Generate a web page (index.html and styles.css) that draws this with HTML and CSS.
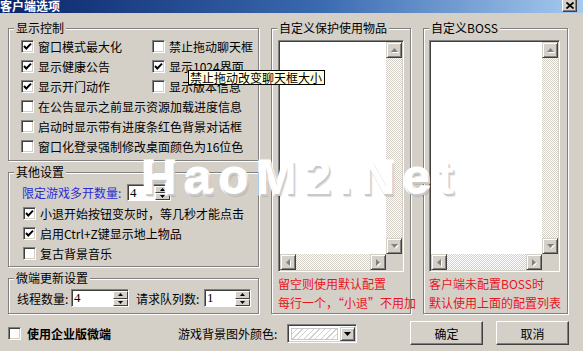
FILE: index.html
```html
<!DOCTYPE html>
<html lang="zh-CN">
<head>
<meta charset="utf-8">
<title>客户端选项</title>
<link rel="stylesheet" href="styles.css">
</head>
<body>
<div class="window">
  <div class="titlebar">
    <span class="title">客户端选项</span>
    <span class="close"><svg width="8" height="7" viewBox="0 0 8 7"><path d="M0.5 0.5 L7.5 6.5 M7.5 0.5 L0.5 6.5" stroke="#000" stroke-width="1.7"/></svg></span>
  </div>

  <div class="main">
    <div class="leftcol">
      <div class="group g1">
        <span class="legend">显示控制</span>
        <div class="grid1">
          <label class="cb"><span class="box on"><svg width="9" height="9" viewBox="0 0 9 9"><path d="M1 4 L3.3 6.5 L8 1.6" fill="none" stroke="#000" stroke-width="1.9"/></svg></span>窗口模式最大化</label>
          <label class="cb"><span class="box"></span>禁止拖动聊天框</label>
          <label class="cb"><span class="box on"><svg width="9" height="9" viewBox="0 0 9 9"><path d="M1 4 L3.3 6.5 L8 1.6" fill="none" stroke="#000" stroke-width="1.9"/></svg></span>显示健康公告</label>
          <label class="cb"><span class="box on"><svg width="9" height="9" viewBox="0 0 9 9"><path d="M1 4 L3.3 6.5 L8 1.6" fill="none" stroke="#000" stroke-width="1.9"/></svg></span>显示1024界面</label>
          <label class="cb"><span class="box on"><svg width="9" height="9" viewBox="0 0 9 9"><path d="M1 4 L3.3 6.5 L8 1.6" fill="none" stroke="#000" stroke-width="1.9"/></svg></span>显示开门动作</label>
          <label class="cb"><span class="box"></span>显示版本信息</label>
          <label class="cb span2"><span class="box"></span>在公告显示之前显示资源加载进度信息</label>
          <label class="cb span2"><span class="box"></span>启动时显示带有进度条红色背景对话框</label>
          <label class="cb span2"><span class="box"></span>窗口化登录强制修改桌面颜色为16位色</label>
        </div>
      </div>

      <div class="group g2">
        <span class="legend">其他设置</span>
        <div class="spinrow">
          <span class="bluelab">限定游戏多开数量:</span>
          <span class="spin s-limit"><span class="val">4</span><span class="arrows"><i><svg width="5" height="3" viewBox="0 0 5 3"><path d="M0 3 L2.5 0 L5 3Z"/></svg></i><i><svg width="5" height="3" viewBox="0 0 5 3"><path d="M0 0 L2.5 3 L5 0Z"/></svg></i></span></span>
        </div>
        <label class="cb row"><span class="box on"><svg width="9" height="9" viewBox="0 0 9 9"><path d="M1 4 L3.3 6.5 L8 1.6" fill="none" stroke="#000" stroke-width="1.9"/></svg></span>小退开始按钮变灰时，等几秒才能点击</label>
        <label class="cb row"><span class="box on"><svg width="9" height="9" viewBox="0 0 9 9"><path d="M1 4 L3.3 6.5 L8 1.6" fill="none" stroke="#000" stroke-width="1.9"/></svg></span>启用Ctrl+Z键显示地上物品</label>
        <label class="cb row"><span class="box"></span>复古背景音乐</label>
      </div>

      <div class="group g3">
        <span class="legend">微端更新设置</span>
        <div class="updrow">
          <span class="lab1">线程数量:</span>
          <span class="spin s-thread"><span class="val">4</span><span class="arrows"><i><svg width="5" height="3" viewBox="0 0 5 3"><path d="M0 3 L2.5 0 L5 3Z"/></svg></i><i><svg width="5" height="3" viewBox="0 0 5 3"><path d="M0 0 L2.5 3 L5 0Z"/></svg></i></span></span>
          <span class="lab2">请求队列数:</span>
          <span class="spin s-queue"><span class="val">1</span><span class="arrows"><i><svg width="5" height="3" viewBox="0 0 5 3"><path d="M0 3 L2.5 0 L5 3Z"/></svg></i><i><svg width="5" height="3" viewBox="0 0 5 3"><path d="M0 0 L2.5 3 L5 0Z"/></svg></i></span></span>
        </div>
      </div>
    </div>

    <div class="group listgroup lg-a">
      <span class="legend">自定义保护使用物品</span>
      <div class="listbox lb-a">
        <div class="lcontent"></div>
        <div class="vscroll">
          <span class="sbtn"><svg width="7" height="4" viewBox="0 0 7 4"><path d="M0 4 L3.5 0 L7 4Z"/></svg></span>
          <span class="track"></span>
          <span class="sbtn"><svg width="7" height="4" viewBox="0 0 7 4"><path d="M0 0 L3.5 4 L7 0Z"/></svg></span>
        </div>
        <div class="hscroll">
          <span class="sbtn"><svg width="4" height="7" viewBox="0 0 4 7"><path d="M4 0 L0 3.5 L4 7Z"/></svg></span>
          <span class="track"></span>
          <span class="sbtn"><svg width="4" height="7" viewBox="0 0 4 7"><path d="M0 0 L4 3.5 L0 7Z"/></svg></span>
        </div>
        <div class="corner"></div>
      </div>
      <div class="note first">留空则使用默认配置</div>
      <div class="note">每行一个，“小退”不用加</div>
    </div>

    <div class="group listgroup lg-b">
      <span class="legend">自定义BOSS</span>
      <div class="listbox lb-b">
        <div class="lcontent"></div>
        <div class="vscroll">
          <span class="sbtn"><svg width="7" height="4" viewBox="0 0 7 4"><path d="M0 4 L3.5 0 L7 4Z"/></svg></span>
          <span class="track"></span>
          <span class="sbtn"><svg width="7" height="4" viewBox="0 0 7 4"><path d="M0 0 L3.5 4 L7 0Z"/></svg></span>
        </div>
        <div class="hscroll">
          <span class="sbtn"><svg width="4" height="7" viewBox="0 0 4 7"><path d="M4 0 L0 3.5 L4 7Z"/></svg></span>
          <span class="track"></span>
          <span class="sbtn"><svg width="4" height="7" viewBox="0 0 4 7"><path d="M0 0 L4 3.5 L0 7Z"/></svg></span>
        </div>
        <div class="corner"></div>
      </div>
      <div class="note first">客户端未配置BOSS时</div>
      <div class="note">默认使用上面的配置列表</div>
    </div>
  </div>

  <div class="bottombar">
    <label class="ent"><span class="box"></span>使用企业版微端</label>
    <span class="colorlab">游戏背景图外颜色:</span>
    <span class="combo"><span class="swatch"></span><span class="dd"><svg width="7" height="4" viewBox="0 0 7 4"><path d="M0 0 L3.5 4 L7 0Z"/></svg></span></span>
    <div class="buttons">
      <span class="btn">确定</span>
      <span class="btn">取消</span>
    </div>
  </div>

  <div class="tip">禁止拖动改变聊天框大小</div>
  <div class="watermark">HaoM2.Net</div>
</div>
</body>
</html>
```

FILE: styles.css
```css
* { box-sizing: border-box; }

body {
  margin: 0;
  width: 583px;
  height: 351px;
  overflow: hidden;
  background: #d4d0c8;
  font-family: "Noto Sans CJK SC", "Liberation Sans", sans-serif;
  font-size: 12px;
  color: #000;
}

.window {
  position: relative;
  width: 583px;
  height: 351px;
}

/* title bar */
.titlebar {
  height: 13px;
  display: flex;
  justify-content: space-between;
  align-items: flex-end;
  overflow: hidden;
  background: linear-gradient(to right, #0a246a 0%, #3a6ab0 55%, #a6caf0 100%);
}
.title {
  color: #fff;
  font-weight: bold;
  font-size: 12px;
  line-height: 16px;
  margin-bottom: -1px;
}
.close {
  align-self: flex-start;
  width: 15px;
  height: 12px;
  margin-right: 6px;
  background: #d4d0c8;
  border: 1px solid;
  border-top: 0;
  border-color: #fff #404040 #404040 #fff;
  box-shadow: inset -1px -1px 0 #808080;
  display: flex;
  align-items: center;
  justify-content: center;
}

/* main layout */
.main {
  display: flex;
  gap: 12px;
  padding: 15px 0 0 8px;
}
.leftcol {
  width: 251px;
  display: flex;
  flex-direction: column;
  gap: 11px;
}

.group {
  position: relative;
  border: 1px solid #808080;
  box-shadow: 1px 1px 0 #fff, inset 1px 1px 0 #fff;
}
.legend {
  position: absolute;
  top: -8px;
  left: 5px;
  padding: 0 2px;
  background: #d4d0c8;
  line-height: 14px;
  white-space: nowrap;
}

/* checkboxes */
.cb {
  display: flex;
  align-items: center;
  gap: 4px;
  white-space: nowrap;
  height: 20px;
}
.box {
  flex: none;
  width: 13px;
  height: 13px;
  background: #fff;
  border: 1px solid;
  border-color: #808080 #fff #fff #808080;
  box-shadow: inset 1px 1px 0 #404040, inset -1px -1px 0 #d4d0c8;
  display: inline-flex;
  align-items: center;
  justify-content: center;
}

.g1 { padding: 7px 0 4px 12px; }
.grid1 {
  display: grid;
  grid-template-columns: 131px auto;
  grid-auto-rows: 20px;
}
.span2 { grid-column: 1 / span 2; }

.g2 { padding: 8px 0 3px 13px; }
.spinrow {
  height: 22px;
  display: flex;
  align-items: center;
}
.bluelab {
  width: 105px;
  color: #2a2ad6;
  white-space: nowrap;
}
.g2 .row .box { margin-left: 1px; }

.g3 { padding: 9px 0 5px 8px; }
.updrow {
  height: 20px;
  display: flex;
  align-items: center;
  white-space: nowrap;
}
.lab1 { width: 54px; }
.lab2 { width: 68px; margin-left: 7px; }

/* spin boxes */
.spin {
  display: flex;
  height: 17px;
  background: #fff;
  border: 1px solid;
  border-color: #808080 #fff #fff #808080;
  box-shadow: inset 1px 1px 0 #404040;
  padding: 1px 0 0 1px;
}
.s-limit { width: 44px; }
.s-thread { width: 58px; height: 18px; }
.s-queue { width: 47px; height: 18px; }
.spin .val {
  flex: 1;
  font-family: "Liberation Serif", serif;
  font-size: 13px;
  line-height: 14px;
  padding-left: 1px;
}
.spin .arrows {
  width: 15px;
  display: flex;
  flex-direction: column;
}
.spin .arrows i {
  flex: 1;
  background: #d4d0c8;
  border: 1px solid;
  border-color: #fff #404040 #404040 #fff;
  display: flex;
  align-items: center;
  justify-content: center;
}

/* list groups */
.listgroup {
  display: flex;
  flex-direction: column;
  padding-top: 11px;
}
.lg-a { width: 140px; padding-left: 6px; }
.lg-b { width: 145px; padding-left: 5px; }

.listbox {
  height: 232px;
  display: grid;
  grid-template-columns: 1fr 16px;
  grid-template-rows: 1fr 16px;
  background: #fff;
  border: 1px solid;
  border-color: #808080 #fff #fff #808080;
  box-shadow: inset 1px 1px 0 #404040, inset -1px -1px 0 #d4d0c8;
  padding: 1px;
}
.lb-a { width: 126px; }
.lb-b { width: 131px; }

.vscroll, .hscroll {
  display: flex;
  background-image: repeating-conic-gradient(#fff 0 25%, #d4d0c8 0 50%);
  background-size: 2px 2px;
}
.vscroll { flex-direction: column; }
.track { flex: 1; }
.corner { background: #d4d0c8; }
.sbtn {
  flex: none;
  width: 16px;
  height: 16px;
  background: #d4d0c8;
  border: 1px solid;
  border-color: #d4d0c8 #404040 #404040 #d4d0c8;
  box-shadow: inset 1px 1px 0 #fff, inset -1px -1px 0 #808080;
  display: flex;
  align-items: center;
  justify-content: center;
}
.sbtn svg {
  fill: #808080;
  filter: drop-shadow(1px 1px 0 #fff);
}

.note {
  color: #e8141e;
  line-height: 19px;
  white-space: nowrap;
}
.note.first { margin-top: 2px; }

/* bottom bar */
.bottombar {
  height: 24px;
  margin-top: 7px;
  display: flex;
  align-items: center;
  padding: 0 14px 0 8px;
}
.ent {
  width: 170px;
  display: flex;
  align-items: center;
  gap: 6px;
  font-weight: bold;
  white-space: nowrap;
}
.colorlab {
  width: 109px;
  white-space: nowrap;
}
.combo {
  width: 70px;
  height: 19px;
  display: flex;
  background: #fff;
  border: 1px solid;
  border-color: #808080 #fff #fff #808080;
  box-shadow: inset 1px 1px 0 #404040, inset -1px -1px 0 #d4d0c8;
  padding: 2px 1px 1px 2px;
}
.swatch {
  flex: 1;
  margin: 1px 2px 1px 1px;
  border: 1px solid #c8c8c8;
  background: repeating-linear-gradient(-45deg, #fff 0 3px, #cfcfcf 3px 4px);
}
.dd {
  width: 15px;
  background: #d4d0c8;
  border: 1px solid;
  border-color: #d4d0c8 #404040 #404040 #d4d0c8;
  box-shadow: inset 1px 1px 0 #fff, inset -1px -1px 0 #808080;
  display: flex;
  align-items: center;
  justify-content: center;
}
.buttons {
  margin-left: auto;
  display: flex;
  gap: 13px;
}
.btn {
  width: 73px;
  height: 24px;
  background: #d4d0c8;
  border: 1px solid;
  border-color: #fff #404040 #404040 #fff;
  box-shadow: inset -1px -1px 0 #808080;
  display: flex;
  align-items: center;
  justify-content: center;
}

/* overlays */
.tip {
  position: absolute;
  left: 188px;
  top: 70px;
  height: 15px;
  background: #ffffe1;
  border: 1px solid #000;
  padding: 0 2px 0 1px;
  line-height: 13px;
  white-space: nowrap;
}
.watermark {
  position: absolute;
  left: 142px;
  top: 154px;
  font-family: "Liberation Sans", sans-serif;
  font-weight: bold;
  font-size: 48px;
  line-height: 48px;
  letter-spacing: 8px;
  color: #fff;
  -webkit-text-stroke: 3px #fff;
  paint-order: stroke fill;
  text-shadow: 1px 2px 0 #c8c8c8, 2px 3px 1px rgba(0,0,0,0.12);
  white-space: nowrap;
}
```
